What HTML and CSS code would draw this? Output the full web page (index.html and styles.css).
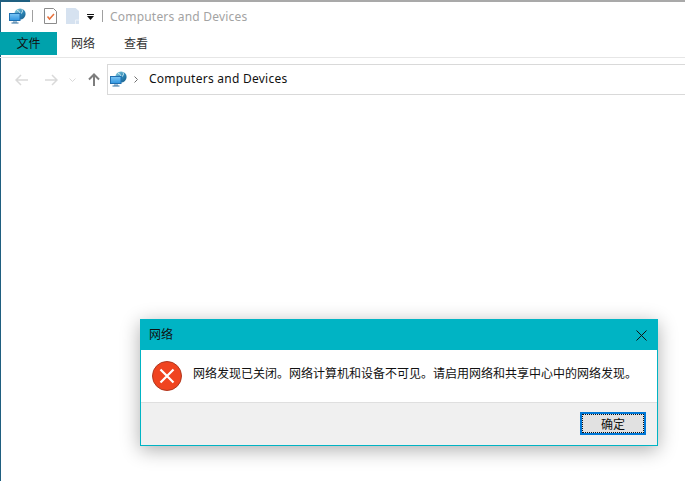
FILE: index.html
```html
<!DOCTYPE html>
<html lang="zh">
<head>
<meta charset="utf-8">
<title>Computers and Devices</title>
<link rel="stylesheet" href="styles.css">
</head>
<body>
<svg class="defs" width="0" height="0" aria-hidden="true">
  <defs>
    <linearGradient id="globe" x1="0" y1="0" x2="1" y2="1">
      <stop offset="0" stop-color="#8fd0dc"/><stop offset=".55" stop-color="#2d87b8"/><stop offset="1" stop-color="#17577f"/>
    </linearGradient>
    <linearGradient id="screen" x1="0" y1="0" x2="0" y2="1">
      <stop offset="0" stop-color="#7cc6f4"/><stop offset="1" stop-color="#2f95e0"/>
    </linearGradient>
    <symbol id="net" viewBox="0 0 17 16">
      <circle cx="11" cy="6" r="5.6" fill="url(#globe)"/>
      <path d="M8 2.5c2 .4 3 1.4 2.6 3M13 1.5c.8 1.6.5 3-1 4" fill="none" stroke="#d4eef2" stroke-width="1"/>
      <rect x=".5" y="5.5" width="10.500" height="7" fill="url(#screen)" stroke="#1f6fb0"/>
      <path d="M4 13.500h4v1H4z" fill="#4d7fa5"/>
      <path d="M2.500 15h7" stroke="#2f6f9f"/>
    </symbol>
  </defs>
</svg>
<div class="window">
  <header class="titlebar">
    <svg class="net-icon"><use href="#net"/></svg>
    <span class="sep sep-a"></span>
    <svg class="qa-props" width="13" height="16" viewBox="0 0 13 16">
      <path d="M.5.500h9l3 3v12H.5z" fill="#fff" stroke="#8c8c8c"/>
      <path d="M3.500 8.500l2 2.500 4.500-5" fill="none" stroke="#e8703a" stroke-width="1.500"/>
    </svg>
    <svg class="qa-new" width="13" height="16" viewBox="0 0 13 16">
      <path d="M0 0h9.500v0L13 3v13H0z" fill="#d6e2f0"/>
      <path d="M9.500 16v-4H13" fill="none" stroke="#eef3f9"/>
    </svg>
    <svg class="qa-drop" width="7" height="6" viewBox="0 0 7 6">
      <path d="M0 0h7v1H0zM0 2h7L3.500 6z" fill="#111"/>
    </svg>
    <span class="sep sep-b"></span>
    <span class="title-text">Computers and Devices</span>
  </header>
  <nav class="tabs">
    <div class="tab tab-file">文件</div>
    <div class="tab tab-net">网络</div>
    <div class="tab tab-view">查看</div>
  </nav>
  <div class="navbar">
    <svg class="nav-btn" width="13" height="12" viewBox="0 0 13 12"><path d="M6 1L1 6l5 5M1 6h12" fill="none" stroke="#d9d9d9" stroke-width="1.500"/></svg>
    <svg class="nav-btn nav-fwd" width="13" height="12" viewBox="0 0 13 12"><path d="M7 1l5 5-5 5M12 6H0" fill="none" stroke="#d9d9d9" stroke-width="1.500"/></svg>
    <svg class="nav-btn nav-chev" width="7" height="4" viewBox="0 0 7 4"><path d="M.5.500l3 3 3-3" fill="none" stroke="#d9d9d9"/></svg>
    <svg class="nav-btn nav-up" width="12" height="13" viewBox="0 0 12 13"><path d="M1 6.500L6 1.500l5 5M6 1.500V13" fill="none" stroke="#7d7d7d" stroke-width="2"/></svg>
    <div class="address">
      <svg class="net-icon"><use href="#net"/></svg>
      <svg class="crumb" width="4" height="7" viewBox="0 0 4 7"><path d="M.5.500l3 3-3 3" fill="none" stroke="#707070"/></svg>
      <span class="address-text">Computers and Devices</span>
    </div>
  </div>
</div>
<section class="dialog" role="alertdialog">
  <div class="dialog-title">
    <span class="dialog-caption">网络</span>
    <svg width="11" height="11" viewBox="0 0 11 11"><path d="M.5.500l10 10M10.500.500l-10 10" stroke="#111" fill="none"/></svg>
  </div>
  <div class="dialog-body">
    <svg class="err" width="30" height="30" viewBox="0 0 30 30">
      <circle cx="15" cy="15" r="14.500" fill="#f04420" stroke="#b0381f"/>
      <path d="M8.500 8.500l13 13M21.500 8.500l-13 13" stroke="#fff" stroke-width="2.200" fill="none"/>
    </svg>
    <p>网络发现已关闭。网络计算机和设备不可见。请启用网络和共享中心中的网络发现。</p>
  </div>
  <div class="dialog-foot">
    <button class="ok">确定</button>
  </div>
</section>
</body>
</html>
```
FILE: styles.css
```css
* { box-sizing: border-box; }
html, body { margin: 0; height: 100%; }
body {
  width: 685px; height: 481px; overflow: hidden; position: relative; background: #fff;
  font-family: "Noto Sans", "Noto Sans CJK SC", sans-serif; font-size: 12px; color: #111;
}
.defs { position: absolute; }
.window {
  height: 481px;
  border-left: 1px solid #1f5f80;
  border-top: 2px solid #a9a9a9;
  position: relative;
}
.window::before {
  content: ""; position: absolute; left: -1px; top: -2px; width: 30px; height: 2px; background: #1f5f80;
}
.titlebar { display: flex; align-items: center; height: 30px; padding: 0 0 2px 8px; }
.net-icon { width: 17px; height: 16px; display: block; }
.sep { width: 1px; height: 12px; background: #a0a0a0; }
.sep-a { margin-left: 6px; }
.qa-props { margin-left: 11px; }
.qa-new { margin-left: 9px; }
.qa-drop { margin-left: 8px; margin-top: 2px; }
.sep-b { margin-left: 8px; }
.title-text { margin-left: 7px; color: #a3a3a3; font-size: 12px; letter-spacing: .2px; }
.tabs {
  display: flex; height: 26px; border-bottom: 1px solid #e6e6e6; margin-left: -1px;
  font-family: "Noto Sans CJK SC", sans-serif;
}
.tab { font-size: 12px; line-height: 22px; height: 23px; }
.tab-file { width: 57px; background: #00a2ac; text-align: center; color: #111; }
.tab-net { margin-left: 14px; color: #333; }
.tab-view { margin-left: 29px; color: #333; }
.navbar { display: flex; align-items: center; height: 31px; margin-top: 6px; padding-left: 14px; }
.nav-btn { display: block; }
.nav-fwd { margin-left: 17px; }
.nav-chev { margin-left: 11px; }
.nav-up { margin-left: 12px; }
.address {
  display: flex; align-items: center; flex: 1; height: 31px; margin-left: 7px; padding: 0 0 1px 2px;
  border: 1px solid #d9d9d9; border-right: 0;
}
.crumb { margin-left: 7px; }
.address-text { margin: 0 0 2px 11px; color: #111; font-size: 12px; letter-spacing: .25px; }
.dialog {
  position: absolute; left: 140px; top: 319px; width: 518px; height: 127px;
  border: 1px solid #00b4c4; background: #f0f0f0;
  box-shadow: 0 4px 18px rgba(0,0,0,.32);
  display: flex; flex-direction: column;
  font-family: "Noto Sans CJK SC", sans-serif;
}
.dialog-title {
  height: 30px; background: #00b4c4; display: flex; align-items: center; justify-content: space-between;
  padding: 0 10px 0 8px; font-size: 12px;
}
.dialog-caption { margin-bottom: 3px; }
.dialog-body {
  height: 53px; background: #fff; border-bottom: 1px solid #dfdfdf;
  display: flex; align-items: center; padding-left: 11px;
}
.err { display: block; }
.dialog-body p { margin: 0 0 7px 11px; font-size: 12px; color: #111; }
.dialog-foot { flex: 1; display: flex; justify-content: flex-end; align-items: flex-start; padding: 9px 11px 0 0; }
.ok {
  width: 66px; height: 23px; padding: 0; font: 12px "Noto Sans CJK SC", sans-serif; color: #111;
  background: #e1e1e1; border: 2px solid #0078d7; outline: 1px dotted #111; outline-offset: -3px;
}
```
